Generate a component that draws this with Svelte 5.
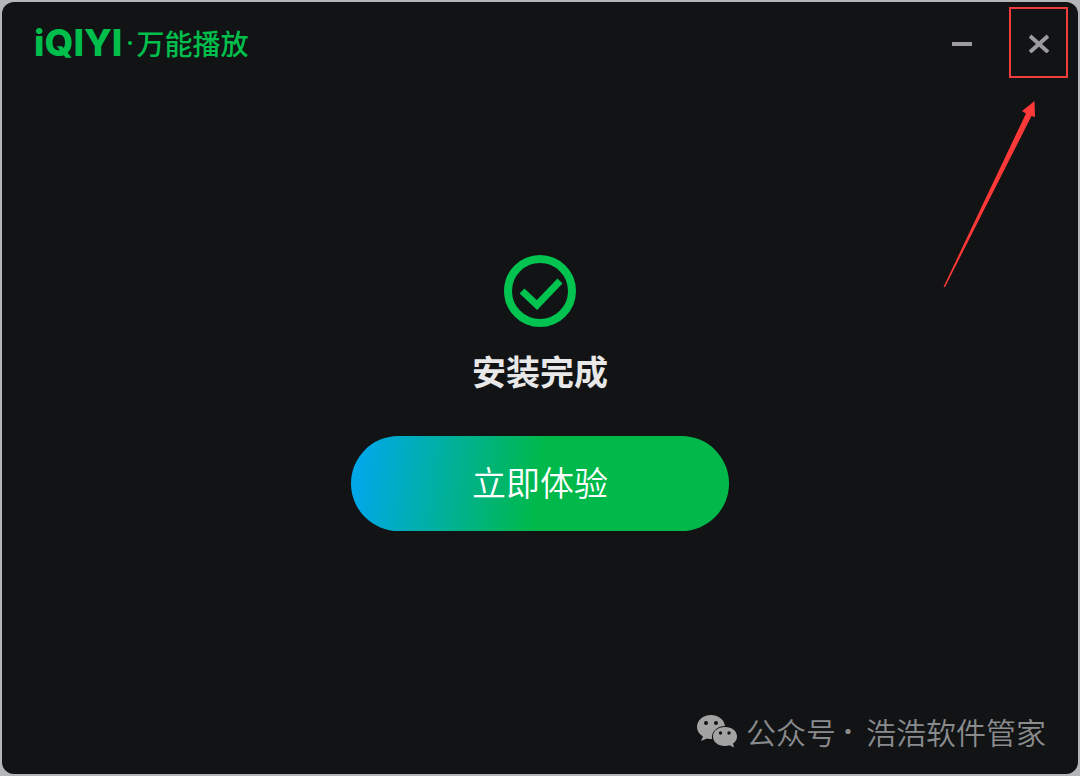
<script>
  let open = $state(true);
  let minimized = $state(false);

  const channel = { type: "公众号", name: "浩浩软件管家" };
</script>

{#if open}
  <div class="window" class:minimized>
    <header class="titlebar">
      <h1 class="brand">
        <span class="brand-latin">iQIYI</span>
        <span class="brand-dot"></span>
        <span class="brand-name">万能播放</span>
      </h1>
      <div class="controls">
        <button class="control" aria-label="最小化" onclick={() => (minimized = true)}>
          <svg width="20" height="20" viewBox="0 0 20 20">
            <path d="M0 11H20" />
          </svg>
        </button>
        <div class="close-wrap">
          <button class="control close" aria-label="关闭" onclick={() => (open = false)}>
            <svg width="20" height="20" viewBox="0 0 20 20">
              <path d="M1 3L19 19M19 3L1 19" />
            </svg>
          </button>
          <!-- 指向关闭按钮的箭头 -->
          <svg class="arrow" width="94" height="188" viewBox="0 0 94 188">
            <path d="M91.5 0L79 10L83 12.5L0.5 186L2 186L88.5 15L92 16Z" />
          </svg>
        </div>
      </div>
    </header>

    <main class="content">
      <svg class="done" width="72" height="72" viewBox="0 0 72 72">
        <circle cx="36" cy="36" r="32" stroke-width="8" />
        <path d="M18 36L33 50L56 26" stroke-width="7" />
      </svg>
      <h2 class="title">安装完成</h2>
      <button class="start">立即体验</button>
    </main>

    <footer class="channel">
      <svg width="42" height="34" viewBox="0 0 42 34">
        <path
          class="bubble"
          d="M15 1C7 1 1 6 1 13C1 17 3 20 7 22.500L5 27L11 24.500C12.500 25 14 25 16 25C15 18 21 12 29 12C28 5 22 1 15 1Z"
        />
        <path
          class="bubble"
          d="M29 13C22 13 17 17 17 22.500C17 28 22 32 29 32C30.500 32 32 31.700 33.500 31.200L38 33.500L37 29.500C39.500 28 41 25.500 41 22.500C41 17 36 13 29 13Z"
        />
        <circle cx="10" cy="9" r="2" />
        <circle cx="20" cy="9" r="2" />
        <circle cx="24.500" cy="19" r="1.700" />
        <circle cx="33" cy="19" r="1.700" />
      </svg>
      <span>{channel.type}</span>
      <span class="sep">·</span>
      <span>{channel.name}</span>
    </footer>
  </div>
{/if}

<style>
  :global(body) {
    background: #b4b6b8;
  }

  .window {
    box-sizing: border-box;
    display: flex;
    flex-direction: column;
    min-height: calc(100vh - 4px);
    margin: 2px;
    border-radius: 12px;
    background: #111315;
    color: #e8e8e8;
    font-family: "Noto Sans CJK SC", "Noto Sans", sans-serif;
  }
  .window.minimized {
    display: none;
  }

  button {
    padding: 0;
    border: 0;
    background: none;
    font-family: inherit;
    cursor: pointer;
  }

  .titlebar {
    display: flex;
    justify-content: space-between;
    align-items: center;
    padding: 5px 10px 0 32px;
  }
  .brand {
    display: flex;
    align-items: center;
    margin: 0;
    color: #00be4b;
    line-height: 40px;
  }
  .brand-latin {
    font-family: Inter, "Noto Sans", sans-serif;
    font-size: 37px;
    font-weight: 800;
  }
  .brand-dot {
    width: 4px;
    height: 4px;
    margin: 0 4px 0 6px;
    border-radius: 50%;
    background: #00be4b;
  }
  .brand-name {
    font-size: 28px;
    font-weight: 500;
  }

  .controls {
    display: flex;
    gap: 17px;
  }
  .control {
    box-sizing: border-box;
    display: flex;
    align-items: center;
    justify-content: center;
    width: 60px;
    height: 71px;
  }
  .control path {
    fill: none;
    stroke: #9c9c9e;
    stroke-width: 4;
  }
  .close {
    border: 2px solid #f03c3c;
  }
  .close-wrap {
    position: relative;
  }
  .close-wrap .close {
    width: 59px;
  }
  .arrow {
    position: absolute;
    top: 94px;
    right: 31px;
    fill: #ff3838;
    pointer-events: none;
  }

  .content {
    display: flex;
    flex: 1;
    flex-direction: column;
    align-items: center;
    justify-content: center;
    padding-bottom: 2px;
  }
  .done {
    fill: none;
    stroke: #00c350;
  }
  .title {
    margin: 18px 0 40px;
    font-size: 34px;
    font-weight: 700;
    line-height: 51px;
  }
  .start {
    width: 378px;
    max-width: 90%;
    height: 95px;
    padding-bottom: 4px;
    border-radius: 48px;
    background: linear-gradient(98deg, #00a8e8 3%, #00b94a 50%);
    color: #fff;
    font-size: 34px;
    font-weight: 350;
  }

  .channel {
    display: flex;
    align-items: center;
    justify-content: flex-end;
    padding: 0 32px 21px;
    color: #8a8b8d;
    font-size: 30px;
    font-weight: 350;
    line-height: 44px;
  }
  .channel svg {
    margin-right: 8px;
    fill: #111315;
  }
  .channel .bubble {
    fill: #a3a3a3;
  }
  .sep {
    width: 24px;
    margin-right: 6px;
    font-family: "Noto Sans", sans-serif;
    font-weight: 700;
    text-align: center;
  }
</style>
